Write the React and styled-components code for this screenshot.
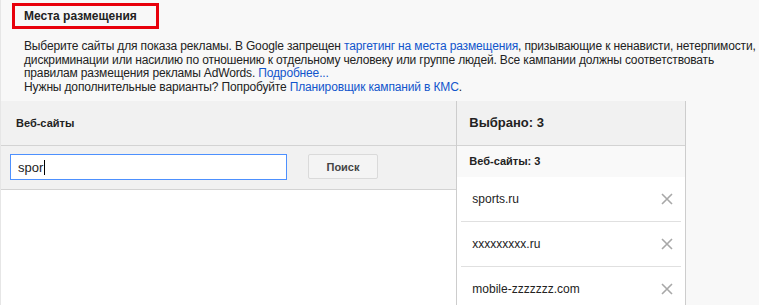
import React from "react";
import styled, { createGlobalStyle } from "styled-components";

const Global = createGlobalStyle`
  html, body { margin: 0; padding: 0; background: #f8f8f8; }
  body { font-family: "Liberation Sans", Arial, sans-serif; color: #222; }
  * { box-sizing: border-box; }
`;

const Page = styled.div`
  width: 759px;
  height: 305px;
  overflow: hidden;
  border-left: 1px solid #e6e6e6;
  display: flex;
  flex-direction: column;
  & > * { flex-shrink: 0; }
`;

const TitleBox = styled.div`
  margin: 3px 0 0 11px;
  width: 147px;
  height: 26px;
  border: 3px solid #e8000b;
  display: flex;
  align-items: center;
  padding-left: 9px;
`;

const Title = styled.h2`
  margin: 0;
  font-size: 12px;
  font-weight: bold;
  color: #222;
`;

const Description = styled.p`
  margin: 11px 0 0 0;
  padding-left: 23px;
  font-size: 12px;
  line-height: 13.7px;
  letter-spacing: -0.15px;
  white-space: nowrap;
  color: #222;
`;

const Link = styled.a`
  color: #15c;
  text-decoration: none;
`;

const Panels = styled.div`
  margin-top: 6px;
  display: flex;
  flex: 1 1 auto;
  min-height: 0;
  width: 685px;
`;

const Column = styled.div`
  display: flex;
  flex-direction: column;
  width: ${(p) => p.$width}px;
  border-right: 1px solid #cdcdcd;
  background: #fff;
  & > * { flex-shrink: 0; }
`;

const Header = styled.div`
  height: 45px;
  background: #f1f1f1;
  border-bottom: 1px solid #d3d3d3;
  display: flex;
  align-items: center;
  padding-left: ${(p) => p.$pad}px;
  font-weight: bold;
  font-size: ${(p) => p.$size}px;
  color: #222;
`;

const SearchRow = styled.div`
  height: 44px;
  background: #f1f1f1;
  border-bottom: 1px solid #d3d3d3;
  display: flex;
  align-items: center;
  padding-left: 9px;
  gap: 21px;
`;

const FakeInput = styled.div`
  width: 277px;
  height: 26px;
  background: #fff;
  border: 1px solid #4d90fe;
  display: flex;
  align-items: center;
  padding-left: 7px;
  font-size: 13px;
  color: #222;
`;

const Caret = styled.span`
  display: inline-block;
  width: 1px;
  height: 15px;
  background: #000;
  margin-left: 1px;
`;

const Button = styled.button`
  width: 70px;
  height: 25px;
  margin-top: -1px;
  background: #f4f4f4;
  border: 1px solid #dadada;
  border-radius: 2px;
  font-family: inherit;
  font-size: 11px;
  font-weight: bold;
  color: #444;
  padding: 0;
`;

const SubHeader = styled.div`
  height: 31px;
  background: #f9f9f9;
  display: flex;
  align-items: center;
  padding-left: 12px;
  font-size: 11px;
  font-weight: bold;
  color: #222;
`;

const List = styled.ul`
  list-style: none;
  margin: 0;
  padding: 0 4px;
`;

const Item = styled.li`
  height: 45px;
  border-bottom: 1px solid #e0e0e0;
  display: flex;
  align-items: center;
  justify-content: space-between;
  padding: 0 8px 0 11px;
  font-size: 12px;
  color: #222;
`;

const Remove = styled.span`
  display: flex;
  width: 12px;
  height: 12px;
`;

const CloseIcon = () => (
  <svg width="12" height="12" viewBox="0 0 12 12">
    <path d="M1 1 L11 11 M11 1 L1 11" stroke="#a8a8a8" strokeWidth="1.6" />
  </svg>
);

const sites = ["sports.ru", "xxxxxxxxx.ru", "mobile-zzzzzzz.com"];

export default function App() {
  return (
    <>
      <Global />
      <Page>
        <TitleBox>
          <Title>Места размещения</Title>
        </TitleBox>
        <Description>
          Выберите сайты для показа рекламы. В Google запрещен{" "}
          <Link href="#">таргетинг на места размещения</Link>, призывающие к ненависти, нетерпимости,
          <br />
          дискриминации или насилию по отношению к отдельному человеку или группе людей. Все кампании должны соответствовать
          <br />
          правилам размещения рекламы AdWords. <Link href="#">Подробнее...</Link>
          <br />
          Нужны дополнительные варианты? Попробуйте <Link href="#">Планировщик кампаний в КМС</Link>.
        </Description>
        <Panels>
          <Column $width={457}>
            <Header $pad={15} $size={11}>Веб-сайты</Header>
            <SearchRow>
              <FakeInput>
                spor
                <Caret />
              </FakeInput>
              <Button>Поиск</Button>
            </SearchRow>
          </Column>
          <Column $width={229}>
            <Header $pad={12} $size={13}>Выбрано: 3</Header>
            <SubHeader>Веб-сайты: 3</SubHeader>
            <List>
              {sites.map((s) => (
                <Item key={s}>
                  {s}
                  <Remove>
                    <CloseIcon />
                  </Remove>
                </Item>
              ))}
            </List>
          </Column>
        </Panels>
      </Page>
    </>
  );
}
